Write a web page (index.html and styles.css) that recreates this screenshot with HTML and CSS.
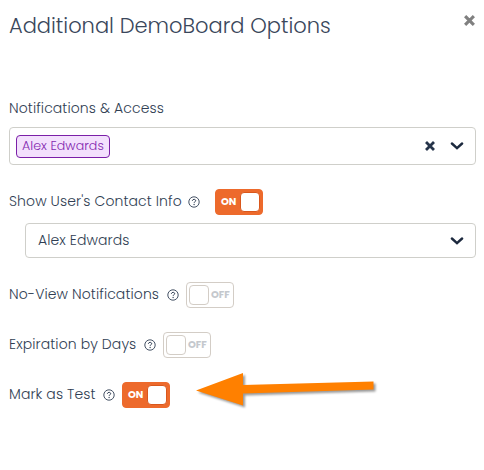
FILE: index.html
```html
<!DOCTYPE html>
<html lang="en">
<head>
<meta charset="utf-8">
<title>Additional DemoBoard Options</title>
<link rel="stylesheet" href="styles.css">
</head>
<body>
<svg class="defs" aria-hidden="true">
  <symbol id="cross" viewBox="0 0 10 10"><path d="M2 2l6 6M8 2l-6 6" fill="none" stroke="currentColor" stroke-width="2.8" stroke-linecap="square"/></symbol>
  <symbol id="chevron" viewBox="0 0 14 8"><path d="M1.900 1.500L7 6.100l5.100-4.600" fill="none" stroke="currentColor" stroke-width="2.400" stroke-linecap="round"/></symbol>
  <symbol id="help" viewBox="0 0 12 12"><circle cx="6" cy="6" r="5.2" fill="none" stroke="currentColor" stroke-width=".9"/><path d="M4.400 4.900c0-2.100 3.300-2 3.300-.2 0 1.100-1.600 1-1.600 2.100" fill="none" stroke="currentColor" stroke-width="1"/><circle cx="6.100" cy="8.500" r=".65" fill="currentColor"/></symbol>
</svg>
<main class="dialog">
  <header class="header">
    <h1 class="title">Additional DemoBoard Options</h1>
    <svg class="close"><use href="#cross"/></svg>
  </header>
  <div class="label access"><span>Notifications &amp; Access</span></div>
  <div class="select multi">
    <span class="tag">Alex Edwards</span>
    <svg class="clear"><use href="#cross"/></svg>
    <svg class="chevron"><use href="#chevron"/></svg>
  </div>
  <div class="row contact">
    <span class="label">Show User's Contact Info</span>
    <svg class="help"><use href="#help"/></svg>
    <span class="toggle on"><b>ON</b><i class="knob"></i></span>
  </div>
  <div class="select single">
    <span class="value">Alex Edwards</span>
    <svg class="chevron"><use href="#chevron"/></svg>
  </div>
  <div class="row noview">
    <span class="label">No-View Notifications</span>
    <svg class="help"><use href="#help"/></svg>
    <span class="toggle"><i class="knob"></i><b>OFF</b></span>
  </div>
  <div class="row expiration">
    <span class="label">Expiration by Days</span>
    <svg class="help"><use href="#help"/></svg>
    <span class="toggle"><i class="knob"></i><b>OFF</b></span>
  </div>
  <div class="row test">
    <span class="label">Mark as Test</span>
    <svg class="help"><use href="#help"/></svg>
    <span class="toggle on"><b>ON</b><i class="knob"></i></span>
  </div>
  <svg class="arrow" viewBox="0 0 190 44"><path d="M4 21.500L51 4v12l130.500-3.500v8L51 24.500v12z"/></svg>
</main>
</body>
</html>
```
FILE: styles.css
```css
* { box-sizing: border-box; }
body {
  margin: 0;
  background: #fff;
  color: #303e53;
  font: 300 14px/20px Poppins, Inter, sans-serif;
  letter-spacing: .1px;
}
svg { display: block; flex: none; }
.defs { position: absolute; width: 0; height: 0; }
.dialog { position: relative; width: 484px; height: 470px; padding: 10px 8px 0 9px; }
.header { display: flex; justify-content: space-between; height: 88px; }
.title { margin: 0; color: #3a475b; font-size: 21px; line-height: 32px; font-weight: 300; letter-spacing: 0; white-space: nowrap; }
.close { width: 11px; height: 11px; margin: 5px 1px 0 0; color: #808080; }
.label { flex: none; white-space: nowrap; }
.access { height: 29px; }
.select {
  display: flex;
  align-items: center;
  border: 1px solid #cfcfca;
  border-radius: 4px;
  padding-right: 11px;
}
.multi { height: 38px; padding-left: 6px; }
.single { height: 35px; margin-left: 16px; padding-left: 12px; }
.value { margin-top: -1px; }
.tag {
  width: 94px;
  height: 23px;
  padding-left: 5px;
  border: 1px solid #7b1fa8;
  border-radius: 4px;
  background: #f3e0fd;
  color: #8328b0;
  font-size: 12.6px;
  line-height: 20px;
  letter-spacing: .05px;
  white-space: nowrap;
}
.chevron { width: 14px; height: 8px; margin-left: auto; color: #1c293e; }
.clear { width: 10px; height: 10px; margin-left: auto; color: #26344a; }
.clear + .chevron { margin-left: 15px; }
.row { display: flex; align-items: center; height: 26px; }
.row .label { margin-top: -2px; }
.help { width: 12px; height: 12px; margin: 0 8px 0 7px; }
.contact { margin: 24px 0 8px; }
.contact .label { width: 172px; }
.contact .help { margin-right: 15px; }
.noview { margin: 24px 0; }
.noview .label { width: 150px; }
.noview .help, .expiration .help { margin: 0 7px 0 8px; }
.expiration { margin-bottom: 24px; }
.expiration .label { width: 127px; }
.test .label { width: 87px; }
.test .help { margin-right: 7px; }
.toggle {
  display: flex;
  align-items: center;
  width: 48px;
  height: 26px;
  padding: 0 2px;
  border: 1px solid #d3cdc6;
  border-radius: 4px;
  color: #c4c8cd;
}
.toggle b { font-size: 10px; line-height: 20px; font-weight: 700; letter-spacing: 0; margin-left: 2px; }
.knob { width: 20px; height: 20px; border: 1px solid #d3cdc6; border-radius: 4px; background: #fff; }
.on { border-color: #ed6a2c; background: #ed6a2c; color: #fff; }
.on b { margin-left: 3px; }
.on .knob { margin-left: auto; border-color: #d9571c; }
.arrow { position: absolute; left: 192px; top: 369px; width: 190px; height: 44px; fill: #ff8000; filter: drop-shadow(2px 2px 1px rgba(0, 0, 0, .4)); }
```
